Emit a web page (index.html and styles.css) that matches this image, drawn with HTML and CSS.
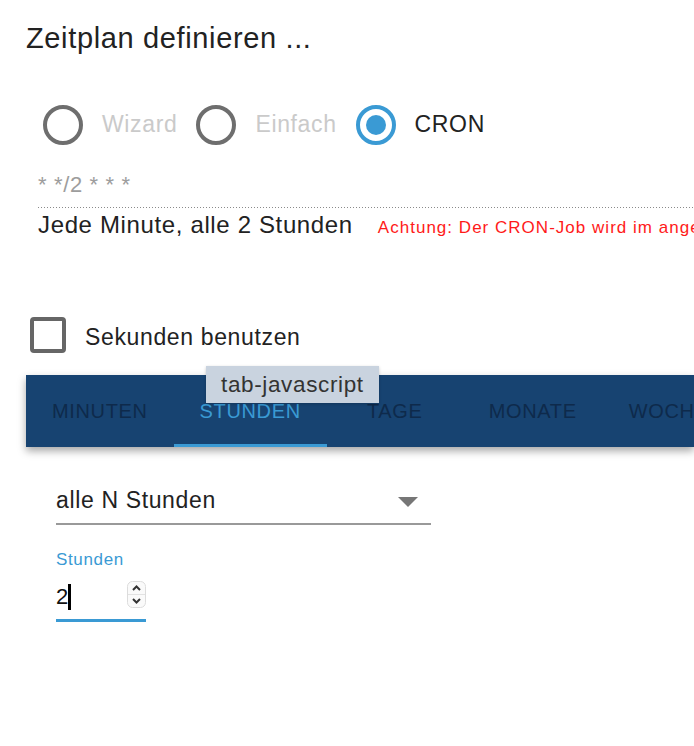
FILE: index.html
```html
<!DOCTYPE html>
<html lang="de">
<head>
    <meta charset="UTF-8">
    <meta name="viewport" content="width=device-width, initial-scale=1.0">
    <title>Zeitplan definieren</title>
    <link rel="stylesheet" href="styles.css">
</head>
<body>
    <h1 class="title">Zeitplan definieren ...</h1>

    <div class="mode-group">
        <label class="radio">
            <span class="radio-circle"></span>
            <span class="radio-label muted">Wizard</span>
        </label>
        <label class="radio">
            <span class="radio-circle"></span>
            <span class="radio-label muted">Einfach</span>
        </label>
        <label class="radio">
            <span class="radio-circle checked"><span class="radio-dot"></span></span>
            <span class="radio-label">CRON</span>
        </label>
    </div>

    <div class="cron">
        <div class="cron-expr">* */2 * * *</div>
        <div class="cron-rule"></div>
        <div class="cron-info">
            <span class="cron-text">Jede Minute, alle 2 Stunden</span>
            <span class="cron-warning">Achtung: Der CRON-Job wird im angegebenen Zeitraum jede Minute ausgeführt!</span>
        </div>
    </div>

    <label class="checkbox">
        <span class="checkbox-box"></span>
        <span class="checkbox-label">Sekunden benutzen</span>
    </label>

    <div class="tabs">
        <div class="tab">MINUTEN</div>
        <div class="tab active">STUNDEN</div>
        <div class="tab">TAGE</div>
        <div class="tab">MONATE</div>
        <div class="tab">WOCHENTAGE</div>
        <div class="tooltip">tab-javascript</div>
    </div>

    <div class="panel">
        <div class="select">
            <span class="select-value">alle N Stunden</span>
            <svg class="select-arrow" width="20" height="10" viewBox="0 0 20 10">
                <path d="M0 0 L20 0 L10 10 Z" fill="#767676"/>
            </svg>
        </div>

        <div class="number-label">Stunden</div>
        <div class="number-field">
            <span class="number-value">2</span>
            <span class="caret"></span>
            <svg class="spinner" width="19" height="27" viewBox="0 0 19 27">
                <rect x="0.5" y="0.5" width="18" height="26" rx="5" fill="#fafafa" stroke="#dcdcdc"/>
                <line x1="1" y1="13.5" x2="18" y2="13.5" stroke="#e2e2e2"/>
                <path d="M6 9 L9.5 5.5 L13 9" fill="none" stroke="#333" stroke-width="2"/>
                <path d="M6 18 L9.5 21.5 L13 18" fill="none" stroke="#333" stroke-width="2"/>
            </svg>
        </div>
    </div>
</body>
</html>
```

FILE: styles.css
```css
body {
    margin: 0;
    font-family: "Liberation Sans", Arial, sans-serif;
    letter-spacing: 0.04em;
    color: #222;
    background: #fff;
    overflow: hidden;
}
.title {
    margin: 22px 0 0 26px;
    font-size: 29px;
    font-weight: normal;
    line-height: 32px;
}

/* mode radios */
.mode-group {
    display: flex;
    align-items: center;
    gap: 19px;
    margin: 51px 0 0 43px;
}
.radio {
    display: flex;
    align-items: center;
    gap: 19px;
}
.radio-circle {
    width: 40px;
    height: 40px;
    box-sizing: border-box;
    border: 4px solid #6e6e6e;
    border-radius: 50%;
    display: flex;
    align-items: center;
    justify-content: center;
}
.radio-circle.checked {
    border-color: #3a9ad4;
}
.radio-dot {
    width: 20px;
    height: 20px;
    border-radius: 50%;
    background: #3a9ad4;
}
.radio-label {
    font-size: 23px;
    line-height: 28px;
    padding-bottom: 2px;
}
.radio-label.muted {
    color: #cacaca;
}

/* cron expression */
.cron {
    margin: 27px 0 0 38px;
}
.cron-expr {
    font-size: 22px;
    line-height: 26px;
    color: #9d9d9d;
    padding-bottom: 9px;
}
.cron-rule {
    height: 1px;
    background-image: linear-gradient(to right, #8a8a8a 1px, transparent 1px);
    background-size: 3px 1px;
}
.cron-info {
    display: flex;
    align-items: baseline;
    gap: 25px;
    margin-top: 3px;
    white-space: nowrap;
    overflow: hidden;
}
.cron-text {
    font-size: 24px;
    line-height: 28px;
}
.cron-warning {
    font-size: 17px;
    letter-spacing: 0.06em;
    color: #ff1a1a;
}

/* checkbox */
.checkbox {
    display: flex;
    align-items: flex-start;
    gap: 19px;
    margin: 78px 0 0 30px;
}
.checkbox-box {
    width: 36px;
    height: 36px;
    box-sizing: border-box;
    border: 4px solid #666;
    border-radius: 4px;
}
.checkbox-label {
    font-size: 23px;
    line-height: 36px;
    padding-top: 2px;
}

/* tabs */
.tabs {
    position: relative;
    display: flex;
    height: 72px;
    margin: 20px 0 0 26px;
    background: #174371;
    box-shadow: 0 4px 8px rgba(0, 0, 0, 0.35);
}
.tab {
    position: relative;
    flex: none;
    min-width: 136px;
    padding: 0 26px;
    box-sizing: border-box;
    text-align: center;
    font-size: 20px;
    line-height: 72px;
    color: #0e2a4b;
    white-space: nowrap;
}
.tab.active {
    color: #3a9ad4;
}
.tab.active::after {
    content: "";
    position: absolute;
    left: 0;
    right: 0;
    bottom: 0;
    height: 3px;
    background: #3a9ad4;
}
.tooltip {
    position: absolute;
    left: 180px;
    top: -9px;
    height: 37px;
    padding: 0 15px;
    background: #c9d3df;
    color: #333;
    font-size: 22.5px;
    line-height: 37px;
    box-shadow: 0 1px 3px rgba(0, 0, 0, 0.2);
    white-space: nowrap;
}

/* hour settings */
.panel {
    margin-left: 56px;
}
.select {
    display: flex;
    justify-content: space-between;
    align-items: flex-start;
    width: 375px;
    margin-top: 38px;
    padding-bottom: 8px;
    border-bottom: 2px solid #999;
}
.select-value {
    font-size: 23px;
    line-height: 30px;
}
.select-arrow {
    margin: 12px 13px 0 0;
}
.number-label {
    margin-top: 25px;
    font-size: 17px;
    line-height: 20px;
    color: #3a9ad4;
}
.number-field {
    display: flex;
    align-items: flex-start;
    width: 90px;
    margin-top: 12px;
    padding-bottom: 7px;
    border-bottom: 3px solid #3a9ad4;
}
.number-value {
    font-size: 22px;
    line-height: 30px;
    color: #111;
}
.caret {
    width: 3px;
    height: 26px;
    margin: 2px 0 0 -1px;
    background: #000;
}
.spinner {
    margin: -1px 0 0 auto;
}
```
